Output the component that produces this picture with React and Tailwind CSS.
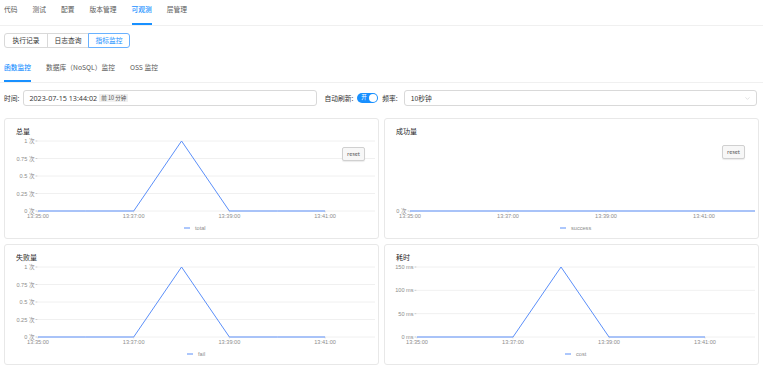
import { ChevronDown } from "lucide-react";

const BLUE = "#5b8ff9";
const X_LABELS = ["13:35:00", "13:37:00", "13:39:00", "13:41:00"];
const FONT = "'Liberation Sans', 'Noto Sans CJK SC', sans-serif";

const charts = [
  {
    title: "总量",
    axisX: 33,
    step: 95.7,
    ticks: ["1 次", "0.75 次", "0.5 次", "0.25 次", "0 次"],
    max: 1,
    values: [0, 0, 0, 1, 0, 0, 0],
    legend: "total",
    legendX: 179,
    reset: "top-[28px]",
  },
  {
    title: "成功量",
    axisX: 25,
    step: 98,
    ticks: ["0 次"],
    max: 1,
    values: null,
    legend: "success",
    legendX: 175,
    reset: "top-[26px]",
  },
  {
    title: "失败量",
    axisX: 33,
    step: 95.7,
    ticks: ["1 次", "0.75 次", "0.5 次", "0.25 次", "0 次"],
    max: 1,
    values: [0, 0, 0, 1, 0, 0, 0],
    legend: "fail",
    legendX: 182,
  },
  {
    title: "耗时",
    axisX: 32,
    step: 96,
    ticks: ["150 ms", "100 ms", "50 ms", "0 ms"],
    max: 1,
    values: [0, 0, 0, 1, 0, 0, 0],
    legend: "cost",
    legendX: 180,
  },
];

const Chart = ({ chart }) => {
  const top = 5;
  const bottom = 75;
  const right = 370;
  const n = chart.ticks.length;
  const tickY = (i) => (n === 1 ? bottom : top + ((bottom - top) * i) / (n - 1));
  const xAt = (m) => chart.axisX + (chart.step / 2) * m;

  // line points, one per minute
  const line = chart.values
    ? chart.values
        .map((v, i) => `${xAt(i)},${bottom - (bottom - top) * (v / chart.max)}`)
        .join(" ")
    : `${chart.axisX},${bottom} ${right},${bottom}`;

  return (
    <div className="relative h-[121px] border border-[#e8e8e8] rounded-[3px] bg-white overflow-hidden">
      <div className="pt-[7px] pl-[11px] text-[7px] leading-[10px] text-[#262626]">
        {chart.title}
      </div>
      <svg width="373" height="102" className="block" style={{ fontFamily: FONT }}>
        {chart.ticks.map((t, i) => (
          <g key={t}>
            <line x1={chart.axisX} x2={right} y1={tickY(i)} y2={tickY(i)} stroke="#ececec" strokeWidth="0.8" />
            <line x1={chart.axisX - 2.5} x2={chart.axisX - 0.5} y1={tickY(i)} y2={tickY(i)} stroke="#aaa" strokeWidth="0.6" />
            <text x={chart.axisX - 3.5} y={tickY(i) + 2} textAnchor="end" fontSize="5.6" fill="#8c8c8c">
              {t}
            </text>
          </g>
        ))}
        {X_LABELS.map((l, i) => (
          <g key={l}>
            <line x1={xAt(i * 2)} x2={xAt(i * 2)} y1={bottom} y2={bottom + 1.5} stroke="#ccc" strokeWidth="0.6" />
            <text x={xAt(i * 2)} y={bottom + 7} textAnchor="middle" fontSize="5.6" fill="#8c8c8c">
              {l}
            </text>
          </g>
        ))}
        <polyline points={line} fill="none" stroke={BLUE} strokeWidth="1" strokeLinejoin="round" />
        <line x1={chart.legendX} x2={chart.legendX + 6} y1="92" y2="92" stroke={BLUE} strokeWidth="1" />
        <text x={chart.legendX + 11} y="94" fontSize="5.6" fill="#8c8c8c">
          {chart.legend}
        </text>
      </svg>
      {chart.reset && (
        <button
          className={`absolute right-[13px] ${chart.reset} w-[23px] h-[14px] bg-[#f7f7f7] border border-[#d0d0d0] rounded-[2px] shadow-[0_1px_1px_rgba(0,0,0,0.08)] text-[5.5px] text-[#555]`}
        >
          reset
        </button>
      )}
    </div>
  );
};

const App = () => {
  const navItems = ["代码", "测试", "配置", "版本管理", "可观测", "层管理"];
  const subTabs = ["函数监控", "数据库（NoSQL）监控", "OSS 监控"];
  const buttons = ["执行记录", "日志查询", "指标监控"];

  return (
    <div
      className="w-[763px] h-[366px] bg-white overflow-hidden text-[#595959]"
      style={{ fontFamily: "'Noto Sans CJK SC', 'Liberation Sans', sans-serif" }}
    >
      {/* top nav */}
      <div className="flex gap-[15px] pl-[4px] h-[26px] border-b border-[#f0f0f0] text-[6.75px]">
        {navItems.map((item) => (
          <div
            key={item}
            className={`pt-[4px] leading-[10px] border-b-2 ${
              item === "可观测" ? "border-[#1890ff] text-[#1890ff] font-medium" : "border-transparent"
            }`}
          >
            {item}
          </div>
        ))}
      </div>

      {/* button group */}
      <div className="flex mt-[7px] ml-[4px] text-[6.75px]">
        {buttons.map((b, i) => (
          <div
            key={b}
            className={`h-[15px] px-[6.5px] flex items-center border ${
              i === 2
                ? "border-[#69b1ff] text-[#1890ff] rounded-r-[3px] -ml-px relative"
                : "border-[#d9d9d9] text-[#333]"
            } ${i === 0 ? "rounded-l-[3px] px-[7.5px]" : ""} ${i === 1 ? "-ml-px" : ""}`}
          >
            {b}
          </div>
        ))}
      </div>

      {/* sub tabs */}
      <div className="flex gap-[15px] pl-[4px] mt-[7px] border-b border-[#f0f0f0] text-[6.75px]">
        {subTabs.map((t, i) => (
          <div
            key={t}
            className={`h-[27px] pt-[7px] leading-[10px] border-b-2 ${
              i === 0 ? "border-[#1890ff] text-[#1890ff] font-medium" : "border-transparent"
            }`}
          >
            {t}
          </div>
        ))}
      </div>

      {/* filter row */}
      <div className="flex items-center mt-[7px] pl-[4px] pr-[6px] h-[16px] text-[6.75px] text-[#333]">
        <span>时间:</span>
        <div className="ml-[4px] w-[294px] h-[16px] border border-[#d9d9d9] rounded-[3px] flex items-center pl-[5px]">
          <span className="text-[7.2px] text-[#333]" style={{ fontFamily: "'Open Sans', sans-serif" }}>
            2023-07-15 13:44:02
          </span>
          <span className="ml-[2px] px-[2px] h-[8px] leading-[8px] bg-[#f0f0f0] text-[5.5px] text-[#555] whitespace-pre">
            {"前 10 分钟"}
          </span>
        </div>
        <span className="ml-[7px]">自动刷新:</span>
        <div className="ml-[4px] w-[21px] h-[10px] rounded-full bg-[#1890ff] flex items-center justify-between pl-[4px] pr-[1px]">
          <span className="text-[5.5px] leading-none text-white">开</span>
          <span className="w-[8px] h-[8px] rounded-full bg-white" />
        </div>
        <span className="ml-[4px]">频率:</span>
        <div className="ml-[6px] flex-1 h-[16px] border border-[#d9d9d9] rounded-[3px] flex items-center justify-between pl-[6px] pr-[5px]">
          <span>10秒钟</span>
          <ChevronDown size={7} strokeWidth={1.5} color="#bfbfbf" />
        </div>
      </div>

      {/* charts */}
      <div className="grid grid-cols-2 gap-[5px] mt-[12px] px-[4px]">
        {charts.map((c) => (
          <Chart key={c.title} chart={c} />
        ))}
      </div>
    </div>
  );
};

export default App;
